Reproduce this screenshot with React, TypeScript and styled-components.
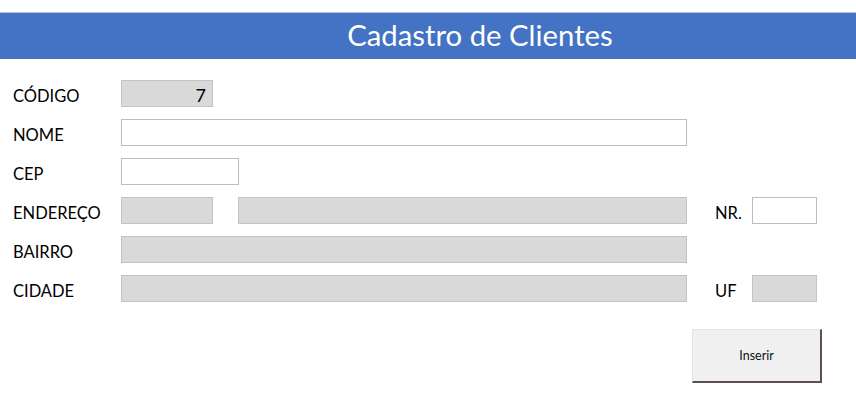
import React from 'react';
import styled, { createGlobalStyle } from 'styled-components';

const GlobalStyle = createGlobalStyle`
  html, body {
    margin: 0;
    padding: 0;
    background: #ffffff;
  }
  body {
    font-family: Lato, "Open Sans", "Liberation Sans", sans-serif;
    color: #000;
  }
`;

const Page = styled.div`
  width: 856px;
  height: 411px;
  padding-top: 12px;
  box-sizing: border-box;
`;

const Header = styled.header`
  height: 47px;
  background: #4472c4;
  border-top: 1px solid #b4c0d8;
  display: flex;
  align-items: center;
  justify-content: center;
  padding: 0 0 3px 104px;
  box-sizing: border-box;
`;

const Title = styled.h1`
  margin: 0;
  font-family: Lato, "Open Sans", sans-serif;
  font-weight: 400;
  font-size: 29.3px;
  color: #ffffff;
`;

const Form = styled.div`
  display: flex;
  flex-direction: column;
  gap: 12px;
  padding: 21px 0 0 13px;
`;

const Row = styled.div`
  display: grid;
  grid-template-columns: 108px 566px 28px 37px 65px;
  grid-template-rows: 27px;
  height: 27px;
  align-items: center;
`;

const Label = styled.label`
  grid-column: 1;
  height: 27px;
  font-size: 16.5px;
  line-height: 32px;
  white-space: nowrap;
`;

const SideLabel = styled(Label)`
  grid-column: 4;
`;

const Field = styled.input<{ $filled?: boolean; $width?: number }>`
  box-sizing: border-box;
  height: 27px;
  width: ${(p) => (p.$width ? `${p.$width}px` : '100%')};
  margin: 0;
  padding: 2px 6px 0;
  border: 1px solid ${(p) => (p.$filled ? '#c3c3c3' : '#bcbcbc')};
  background: ${(p) => (p.$filled ? '#d9d9d9' : '#ffffff')};
  font-family: Lato, "Open Sans", sans-serif;
  font-size: 18px;
  text-align: right;
  color: #000;
  outline: none;
`;

const SideField = styled(Field)`
  grid-column: 5;
`;

const Pair = styled.div`
  grid-column: 2;
  display: flex;
  gap: 25px;
`;

const Actions = styled.div`
  display: flex;
  justify-content: flex-end;
  padding: 27px 34px 0 0;
`;

const Button = styled.button`
  width: 130px;
  height: 54px;
  box-sizing: border-box;
  background: #f0f0f0;
  border: 1px solid #e3e3e3;
  border-right: 2px solid #5e5050;
  border-bottom: 2px solid #5e5050;
  font-family: Lato, "Open Sans", sans-serif;
  font-size: 12.5px;
  color: #111;
  cursor: pointer;
`;

export default function App() {
  return (
    <Page>
      <GlobalStyle />
      <Header>
        <Title>Cadastro de Clientes</Title>
      </Header>
      <Form>
        <Row>
          <Label>CÓDIGO</Label>
          <Field $filled $width={92} value="7" readOnly />
        </Row>
        <Row>
          <Label>NOME</Label>
          <Field />
        </Row>
        <Row>
          <Label>CEP</Label>
          <Field $width={118} />
        </Row>
        <Row>
          <Label>ENDEREÇO</Label>
          <Pair>
            <Field $filled $width={92} readOnly />
            <Field $filled $width={449} readOnly />
          </Pair>
          <SideLabel>NR.</SideLabel>
          <SideField />
        </Row>
        <Row>
          <Label>BAIRRO</Label>
          <Field $filled readOnly />
        </Row>
        <Row>
          <Label>CIDADE</Label>
          <Field $filled readOnly />
          <SideLabel>UF</SideLabel>
          <SideField $filled readOnly />
        </Row>
      </Form>
      <Actions>
        <Button>Inserir</Button>
      </Actions>
    </Page>
  );
}
